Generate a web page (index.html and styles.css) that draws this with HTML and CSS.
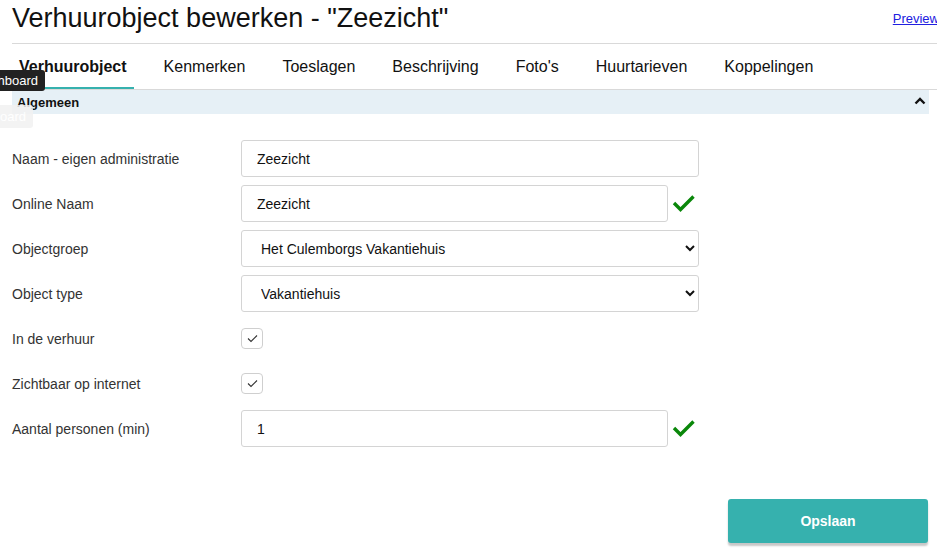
FILE: index.html
```html
<!DOCTYPE html>
<html lang="nl">
<head>
<meta charset="utf-8">
<title>Verhuurobject bewerken</title>
<link rel="stylesheet" href="styles.css">
</head>
<body>
<div class="page">
  <header class="page-head">
    <h1 class="title">Verhuurobject bewerken - "Zeezicht"</h1>
    <a class="preview" href="#">Preview</a>
  </header>
  <nav class="tabs">
    <a class="tab active" href="#">Verhuurobject</a>
    <a class="tab" href="#">Kenmerken</a>
    <a class="tab" href="#">Toeslagen</a>
    <a class="tab" href="#">Beschrijving</a>
    <a class="tab" href="#">Foto's</a>
    <a class="tab" href="#">Huurtarieven</a>
    <a class="tab" href="#">Koppelingen</a>
  </nav>
  <div class="content">
    <div class="section-head">
      <span>Algemeen</span>
      <svg class="chev" width="12" height="8" viewBox="0 0 12 8"><polyline points="1.5,6.5 6,2 10.5,6.5" fill="none" stroke="#111" stroke-width="2.4"/></svg>
    </div>
    <form class="form">
      <div class="row">
        <label class="lbl">Naam - eigen administratie</label>
        <input class="field" type="text" value="Zeezicht">
      </div>
      <div class="row">
        <label class="lbl">Online Naam</label>
        <input class="field short" type="text" value="Zeezicht">
        <svg class="ok" width="24" height="20" viewBox="0 0 24 20"><polyline points="2,10 8.5,16.5 21.5,3.5" fill="none" stroke="#0a870a" stroke-width="3.4"/></svg>
      </div>
      <div class="row">
        <label class="lbl">Objectgroep</label>
        <select class="field sel"><option>Het Culemborgs Vakantiehuis</option></select>
      </div>
      <div class="row">
        <label class="lbl">Object type</label>
        <select class="field sel"><option>Vakantiehuis</option></select>
      </div>
      <div class="row">
        <label class="lbl">In de verhuur</label>
        <span class="check"><svg width="11" height="9" viewBox="0 0 11 9"><polyline points="1,4.5 4,7.5 10,1.5" fill="none" stroke="#333" stroke-width="1.1"/></svg></span>
      </div>
      <div class="row">
        <label class="lbl">Zichtbaar op internet</label>
        <span class="check"><svg width="11" height="9" viewBox="0 0 11 9"><polyline points="1,4.5 4,7.5 10,1.5" fill="none" stroke="#333" stroke-width="1.1"/></svg></span>
      </div>
      <div class="row">
        <label class="lbl">Aantal personen (min)</label>
        <input class="field short" type="text" value="1">
        <svg class="ok" width="24" height="20" viewBox="0 0 24 20"><polyline points="2,10 8.5,16.5 21.5,3.5" fill="none" stroke="#0a870a" stroke-width="3.4"/></svg>
      </div>
    </form>
    <div class="actions">
      <button class="save" type="button">Opslaan</button>
    </div>
  </div>
</div>
<div class="tooltip">Dashboard</div>
<div class="tooltip ghost">Dashboard</div>
</body>
</html>
```
FILE: styles.css
```css
html, body {
  margin: 0;
  padding: 0;
  background: #fff;
  overflow: hidden;
}
body {
  font-family: "Liberation Sans", Arial, sans-serif;
  color: #111;
  width: 937px;
  height: 553px;
  position: relative;
}
.page {
  padding-left: 12px;
}
.page-head {
  display: flex;
  align-items: flex-start;
  justify-content: space-between;
  height: 43px;
  border-bottom: 1px solid #d9d9d9;
}
.title {
  margin: 3px 0 0 0;
  font-size: 27px;
  font-weight: normal;
  line-height: 30px;
  color: #111;
}
.preview {
  margin-top: 11px;
  margin-right: -2px;
  font-size: 13px;
  color: #2020e0;
  text-decoration: underline;
}
.tabs {
  display: flex;
  gap: 23px;
  height: 45px;
  border-bottom: 1px solid #d9d9d9;
}
.tab {
  display: block;
  padding: 14px 7px 0 7px;
  font-size: 16px;
  color: #111;
  text-decoration: none;
  box-sizing: border-box;
  height: 45px;
}
.tab.active {
  font-weight: bold;
  border-bottom: 2px solid #36b1ae;
}
.content {
  padding-right: 8px;
}
.section-head {
  display: flex;
  align-items: center;
  justify-content: space-between;
  height: 24px;
  padding: 0 5px;
  background: #e6f0f6;
  font-size: 13px;
  font-weight: bold;
  color: #111;
}
.chev {
  margin-top: -2px;
  margin-right: -2px;
}
.form {
  display: flex;
  flex-direction: column;
  gap: 8px;
  padding-top: 26px;
}
.row {
  display: flex;
  align-items: center;
  height: 37px;
}
.lbl {
  width: 229px;
  flex: none;
  font-size: 14px;
  color: #333;
}
.field {
  box-sizing: border-box;
  width: 458px;
  height: 37px;
  border: 1px solid #d4d4d4;
  border-radius: 3px;
  padding: 0 15px;
  font-family: "Liberation Sans", Arial, sans-serif;
  font-size: 14px;
  color: #111;
  background: #fff;
  outline: none;
}
.field.short {
  width: 427px;
}
.sel {
  padding: 0 14px 0 15px;
}
.ok {
  margin-left: 4px;
  margin-top: -2px;
}
.check {
  box-sizing: border-box;
  width: 22px;
  height: 21px;
  border: 1px solid #cfcfcf;
  border-radius: 4px;
  display: flex;
  align-items: center;
  justify-content: center;
}
.actions {
  display: flex;
  justify-content: flex-end;
  padding-top: 52px;
  padding-right: 1px;
}
.save {
  width: 200px;
  height: 44px;
  border: none;
  border-radius: 3px;
  background: #36b1ae;
  color: #fff;
  font-family: "Liberation Sans", Arial, sans-serif;
  font-size: 14px;
  font-weight: bold;
  box-shadow: 0 3px 2px rgba(0, 0, 0, 0.22);
}
.tooltip {
  position: absolute;
  top: 70px;
  right: 892px;
  height: 21px;
  line-height: 21px;
  padding: 0 7px;
  background: #222;
  color: #fff;
  font-size: 13px;
  border-radius: 3px;
  white-space: nowrap;
}
.tooltip.ghost {
  top: 105px;
  right: 904px;
  height: 23px;
  line-height: 23px;
  background: #f2f2f2;
  color: #fff;
  opacity: 0.85;
}
```
